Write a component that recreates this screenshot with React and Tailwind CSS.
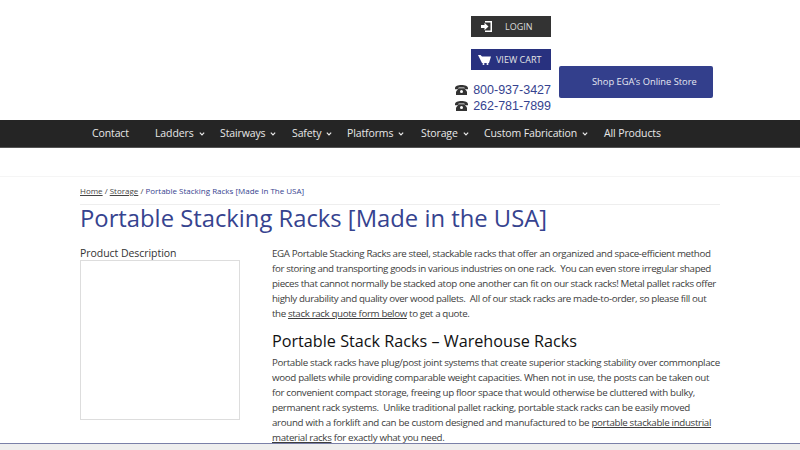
import React from "react";

const Chevron = () => (
  <svg width="6" height="4" viewBox="0 0 7 5" className="ml-[5px] mt-[1px]" fill="none" stroke="#e8e8e8" strokeWidth="1.5">
    <path d="M0.8 0.8 L3.5 3.6 L6.2 0.8" />
  </svg>
);

const Phone = () => (
  <svg width="13" height="10" viewBox="0 0 13 10" fill="#333">
    <path d="M0 3.2 C0 1 3 0 6.5 0 C10 0 13 1 13 3.2 L13 4.2 L9.6 4.2 L9.4 2.6 L3.6 2.6 L3.4 4.2 L0 4.2 Z" />
    <path d="M3.8 3.2 L9.2 3.2 L12 6.5 L12 10 L1 10 L1 6.5 Z" />
    <circle cx="6.5" cy="6.4" r="1.5" fill="#fff" />
  </svg>
);

const items = [
  ["Contact", false, "w-[63px]"],
  ["Ladders", true, "w-[65px]"],
  ["Stairways", true, "w-[72px]"],
  ["Safety", true, "w-[55px]"],
  ["Platforms", true, "w-[74px]"],
  ["Storage", true, "w-[63px]"],
  ["Custom Fabrication", true, "w-[120px]"],
  ["All Products", false, "w-auto"],
];

export default function App() {
  return (
    <div className="relative h-[450px] w-[800px] overflow-hidden bg-white font-['Open_Sans',sans-serif] text-[#333]">
      <header className="relative flex h-[120px] justify-end pr-[249px] pt-[16px]">
        <div className="flex w-[80px] flex-col items-stretch">
          <div className="flex h-[21px] items-center bg-[#333] text-[9px] text-[#ddd]">
            <svg width="11" height="11" viewBox="0 0 11 11" fill="#fff" className="ml-[10px]">
              <path d="M4 0 H11 V11 H4 V9.5 H9.5 V1.5 H4 Z" />
              <path d="M0 4 H3.5 V1.8 L7.5 5.5 L3.5 9.2 V7 H0 Z" />
            </svg>
            <span className="ml-[13px]">LOGIN</span>
          </div>
          <div className="mt-[12px] flex h-[21px] items-center bg-[#28317f] text-[9px] text-[#e5e5e5]">
            <svg width="13" height="10" viewBox="0 0 13 10" fill="#fff" className="ml-[7px]">
              <path d="M0 0 H2.5 L4 1.5 H13 L11 8 H4 Z" />
              <circle cx="5.5" cy="9" r="1" />
              <circle cx="9.5" cy="9" r="1" />
            </svg>
            <span className="ml-[5px]">VIEW CART</span>
          </div>
        </div>

        <div className="absolute left-[455px] top-[82px] w-[96px] whitespace-nowrap font-['Liberation_Sans',sans-serif] text-[12.5px] leading-[16px] text-[#36438f]">
          <div className="flex items-center justify-between"><Phone /><span>800-937-3427</span></div>
          <div className="flex items-center justify-between"><Phone /><span>262-781-7899</span></div>
        </div>

        <div className="absolute left-[559px] top-[66px] flex h-[32px] w-[154px] items-center rounded-[2px] bg-[#333f8c] pl-[33px] text-[9.3px] text-[#e6e8f2]">
          Shop EGA’s Online Store
        </div>
      </header>

      <nav className="flex h-[28px] items-center border-b border-b-[#555] bg-[#252525] pl-[92px] text-[10.5px] tracking-[-0.12px] text-[#e8e8e8]">
        {items.map(([label, chev, w]) => (
          <div key={label} className={`flex items-center ${w}`}>
            <span className="whitespace-nowrap">{label}</span>
            {chev && <Chevron />}
          </div>
        ))}
      </nav>

      <div className="h-[29px] border-b border-b-[#f5f5f5]" />

      <main className="mx-[80px] pt-[7px]">
        <div className="border-b border-b-[#eee] pb-[7px] text-[8px] leading-[13px] text-[#36438f]">
          <span className="text-[#444] underline">Home</span>
          <span className="text-[#444]"> / </span>
          <span className="text-[#444] underline">Storage</span>
          <span className="text-[#444]"> / </span>
          Portable Stacking Racks [Made In The USA]
        </div>
        <h1 className="-mt-[2px] text-[23.8px] leading-[30px] text-[#36438f]">Portable Stacking Racks [Made in the USA]</h1>
        <div className="mt-[13px] flex gap-[32px]">
          <aside className="w-[160px] shrink-0">
            <div className="text-[10.5px] leading-[15px] tracking-[-0.05px]">Product Description</div>
            <div className="-mt-[1px] h-[160px] w-[160px] border border-[#ddd]" />
          </aside>
          <section className="flex-1 text-[9.75px] leading-[15px] text-[#3d3d3d]">
            <p className="tracking-[-0.37px]">
              EGA Portable Stacking Racks are steel, stackable racks that offer an organized and space-efficient method for storing and transporting goods in various industries on one rack.&nbsp; You can even store irregular shaped pieces that cannot normally be stacked atop one another can fit on our stack racks! Metal pallet racks offer highly durability and quality over wood pallets.&nbsp; All of our stack racks are made-to-order, so please fill out the <span className="underline">stack rack quote form below</span> to get a quote.
            </p>
            <h2 className="mt-[8px] text-[16.2px] leading-[24px] tracking-normal text-[#111]">Portable Stack Racks – Warehouse Racks</h2>
            <p className="mt-[2px] tracking-[-0.33px]">
              Portable stack racks have plug/post joint systems that create superior stacking stability over commonplace wood pallets while providing comparable weight capacities. When not in use, the posts can be taken out for convenient compact storage, freeing up floor space that would otherwise be cluttered with bulky, permanent rack systems.&nbsp; Unlike traditional pallet racking, portable stack racks can be easily moved around with a forklift and can be custom designed and manufactured to be <span className="underline">portable stackable industrial material racks</span> for exactly what you need.
            </p>
          </section>
        </div>
      </main>

      <div className="absolute inset-x-0 bottom-0 h-[7px] border-t border-t-[#7a80a8] bg-[#eeeeee]" />
    </div>
  );
}
